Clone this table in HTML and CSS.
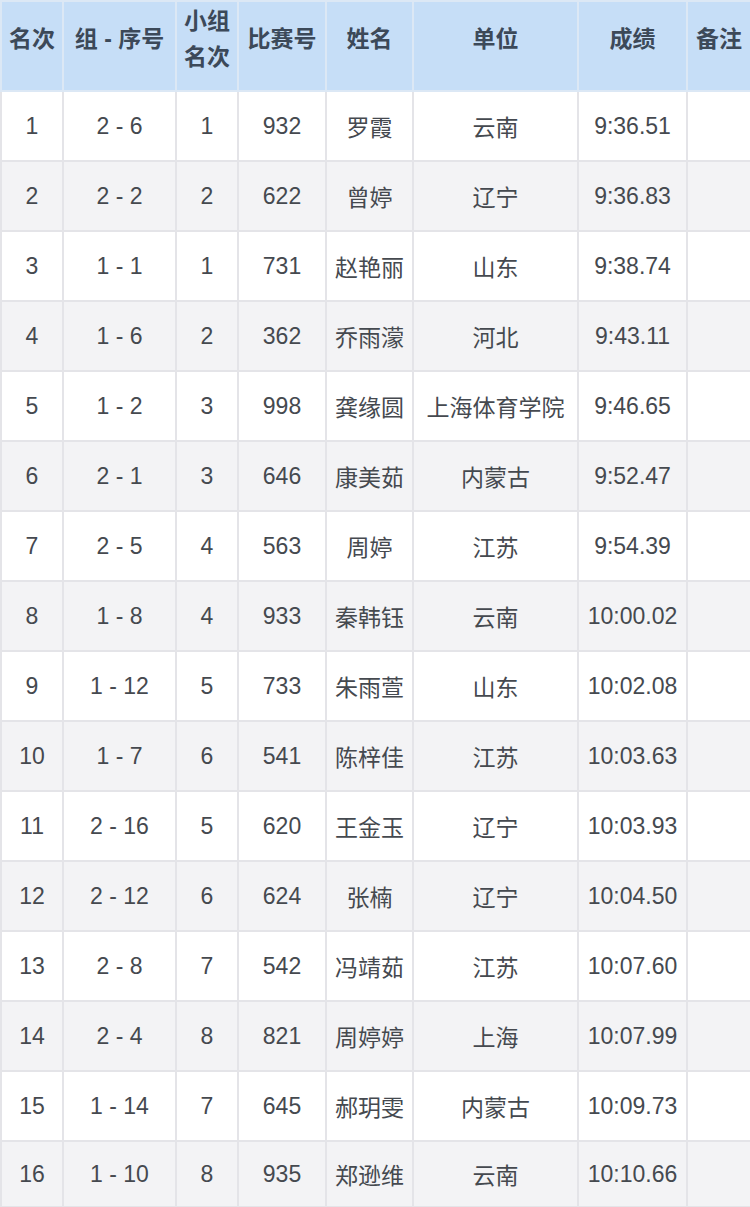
FILE: index.html
```html
<!DOCTYPE html>
<html lang="zh">
<head>
<meta charset="utf-8">
<link rel="stylesheet" href="styles.css">
</head>
<body>
<table class="results">
<colgroup>
<col class="c1"><col class="c2"><col class="c3"><col class="c4"><col class="c5"><col class="c6"><col class="c7"><col class="c8">
</colgroup>
<thead>
<tr>
<th>名次</th><th>组 - 序号</th><th>小组<br>名次</th><th>比赛号</th><th>姓名</th><th>单位</th><th>成绩</th><th>备注</th>
</tr>
</thead>
<tbody>
<tr><td>1</td><td>2 - 6</td><td>1</td><td>932</td><td>罗霞</td><td>云南</td><td>9:36.51</td><td></td></tr>
<tr><td>2</td><td>2 - 2</td><td>2</td><td>622</td><td>曾婷</td><td>辽宁</td><td>9:36.83</td><td></td></tr>
<tr><td>3</td><td>1 - 1</td><td>1</td><td>731</td><td>赵艳丽</td><td>山东</td><td>9:38.74</td><td></td></tr>
<tr><td>4</td><td>1 - 6</td><td>2</td><td>362</td><td>乔雨濛</td><td>河北</td><td>9:43.11</td><td></td></tr>
<tr><td>5</td><td>1 - 2</td><td>3</td><td>998</td><td>龚缘圆</td><td>上海体育学院</td><td>9:46.65</td><td></td></tr>
<tr><td>6</td><td>2 - 1</td><td>3</td><td>646</td><td>康美茹</td><td>内蒙古</td><td>9:52.47</td><td></td></tr>
<tr><td>7</td><td>2 - 5</td><td>4</td><td>563</td><td>周婷</td><td>江苏</td><td>9:54.39</td><td></td></tr>
<tr><td>8</td><td>1 - 8</td><td>4</td><td>933</td><td>秦韩钰</td><td>云南</td><td>10:00.02</td><td></td></tr>
<tr><td>9</td><td>1 - 12</td><td>5</td><td>733</td><td>朱雨萱</td><td>山东</td><td>10:02.08</td><td></td></tr>
<tr><td>10</td><td>1 - 7</td><td>6</td><td>541</td><td>陈梓佳</td><td>江苏</td><td>10:03.63</td><td></td></tr>
<tr><td>11</td><td>2 - 16</td><td>5</td><td>620</td><td>王金玉</td><td>辽宁</td><td>10:03.93</td><td></td></tr>
<tr><td>12</td><td>2 - 12</td><td>6</td><td>624</td><td>张楠</td><td>辽宁</td><td>10:04.50</td><td></td></tr>
<tr><td>13</td><td>2 - 8</td><td>7</td><td>542</td><td>冯靖茹</td><td>江苏</td><td>10:07.60</td><td></td></tr>
<tr><td>14</td><td>2 - 4</td><td>8</td><td>821</td><td>周婷婷</td><td>上海</td><td>10:07.99</td><td></td></tr>
<tr><td>15</td><td>1 - 14</td><td>7</td><td>645</td><td>郝玥雯</td><td>内蒙古</td><td>10:09.73</td><td></td></tr>
<tr class="last"><td>16</td><td>1 - 10</td><td>8</td><td>935</td><td>郑逊维</td><td>云南</td><td>10:10.66</td><td></td></tr>
</tbody>
</table>
</body>
</html>
```

FILE: styles.css
```css
html, body {
  margin: 0;
  padding: 0;
  background: #ffffff;
}

body {
  width: 750px;
  height: 1207px;
  overflow: hidden;
  font-family: "Liberation Sans", "Noto Sans CJK SC", sans-serif;
}

.results {
  width: 750px;
  table-layout: fixed;
  border-collapse: collapse;
  font-size: 23px;
}

.c1 { width: 62px; }
.c2 { width: 113px; }
.c3 { width: 62px; }
.c4 { width: 88px; }
.c5 { width: 87px; }
.c6 { width: 165px; }
.c7 { width: 109px; }
.c8 { width: 64px; }

.results th,
.results td {
  border: 2px solid #e4e4e8;
  text-align: center;
  vertical-align: middle;
  padding: 0;
  white-space: nowrap;
}

.results th {
  height: 73px;
  padding-bottom: 15px;
  background: #c6def7;
  color: #3c4959;
  font-weight: bold;
  line-height: 36px;
  border-color: #dce8f5;
}

.results td {
  height: 68px;
  color: #45494f;
}

.results tbody tr:nth-child(even) td {
  background: #f3f3f5;
}

.results tbody tr.last td {
  height: 64px;
}
```
